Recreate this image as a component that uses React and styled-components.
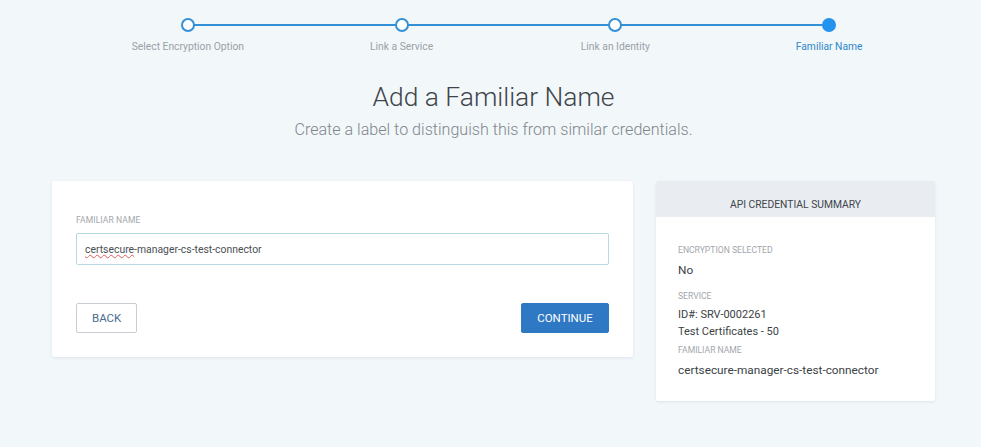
import React from 'react';
import styled, { createGlobalStyle } from 'styled-components';

const steps = [
  'Select Encryption Option',
  'Link a Service',
  'Link an Identity',
  'Familiar Name',
];

const summary = [
  { label: 'ENCRYPTION SELECTED', values: ['No'], big: true },
  { label: 'SERVICE', values: ['ID#: SRV-0002261', 'Test Certificates - 50'] },
  { label: 'FAMILIAR NAME', values: ['certsecure-manager-cs-test-connector'], big: true },
];

const App = () => {
  const active = steps.length - 1;
  return (
    <Page>
      <GlobalStyle />
      <Stepper>
        <Track />
        {steps.map((s, i) => (
          <Step key={s}>
            <Dot done={i === active} />
            <StepLabel active={i === active}>{s}</StepLabel>
          </Step>
        ))}
      </Stepper>

      <Heading>
        <h1>Add a Familiar Name</h1>
        <p>Create a label to distinguish this from similar credentials.</p>
      </Heading>

      <Content>
        <FormCard>
          <FieldLabel>FAMILIAR NAME</FieldLabel>
          <InputWrap>
            <Input defaultValue="certsecure-manager-cs-test-connector" spellCheck={false} />
            <Misspelt aria-hidden>certsecure</Misspelt>
          </InputWrap>
          <Actions>
            <Button>BACK</Button>
            <Button primary>CONTINUE</Button>
          </Actions>
        </FormCard>

        <SummaryCard>
          <SummaryHead>API CREDENTIAL SUMMARY</SummaryHead>
          <SummaryBody>
            {summary.map(item => (
              <SummaryItem key={item.label}>
                <SmallLabel>{item.label}</SmallLabel>
                {item.values.map(v => (
                  <Value key={v} big={item.big}>{v}</Value>
                ))}
              </SummaryItem>
            ))}
          </SummaryBody>
        </SummaryCard>
      </Content>
    </Page>
  );
};

const GlobalStyle = createGlobalStyle`
  html, body {
    margin: 0;
    background: #f2f7fa;
  }
  * { box-sizing: border-box; }
  body {
    font-family: Roboto, "Liberation Sans", Arial, sans-serif;
    color: #3a3f45;
  }
`;

const Page = styled.div`
  width: 981px;
  height: 447px;
  padding-top: 18px;
`;

const Stepper = styled.div`
  position: relative;
  display: grid;
  grid-template-columns: repeat(4, 1fr);
  width: 855px;
  margin-left: 81px;
`;

const Track = styled.div`
  position: absolute;
  top: 6px;
  left: 107px;
  right: 107px;
  height: 2px;
  background: #3490d6;
`;

const Step = styled.div`
  display: flex;
  flex-direction: column;
  align-items: center;
  position: relative;
`;

const Dot = styled.span`
  width: 14px;
  height: 14px;
  border-radius: 50%;
  border: 2px solid ${p => (p.done ? '#2393ee' : '#3490d6')};
  background: ${p => (p.done ? '#2393ee' : '#ffffff')};
`;

const StepLabel = styled.span`
  margin-top: 8px;
  font-size: 10.3px;
  color: ${p => (p.active ? '#2e88cb' : '#9ba1a7')};
`;

const Heading = styled.div`
  text-align: center;
  margin-top: 28px;
  padding-left: 6px;

  h1 {
    margin: 0;
    font-size: 26.4px;
    font-weight: 300;
    color: #40454b;
    line-height: 32px;
  }
  p {
    margin: 7px 0 0;
    font-size: 16.1px;
    font-weight: 300;
    color: #80868c;
    line-height: 20px;
  }
`;

const Content = styled.div`
  display: flex;
  align-items: flex-start;
  gap: 23px;
  margin: 41px 0 0 52px;
`;

const Card = styled.div`
  background: #ffffff;
  border-radius: 2px;
  box-shadow: 0 1px 3px rgba(40, 70, 100, 0.1);
`;

const FormCard = styled(Card)`
  width: 581px;
  height: 176px;
  padding: 34px 24px 0;
`;

const FieldLabel = styled.div`
  font-size: 8.5px;
  color: #a2a7ac;
  letter-spacing: 0.1px;
  margin-bottom: 8px;
`;

const InputWrap = styled.div`
  position: relative;
  width: 533px;
`;

const Input = styled.input`
  display: block;
  width: 100%;
  height: 32px;
  border: 1px solid #b7d9e3;
  border-radius: 2px;
  padding: 0 8px;
  font-family: inherit;
  font-size: 10.4px;
  color: #4a4f55;
  outline: none;
`;

const Misspelt = styled.span`
  position: absolute;
  left: 9px;
  top: 0;
  line-height: 32px;
  font-size: 10.4px;
  color: transparent;
  text-decoration: underline wavy #e05a5a;
  text-decoration-thickness: 1px;
  text-underline-offset: 2px;
  pointer-events: none;
`;

const Actions = styled.div`
  display: flex;
  justify-content: space-between;
  width: 533px;
  margin-top: 38px;
`;

const Button = styled.button`
  height: 30px;
  padding: 0 15px;
  font-family: inherit;
  font-size: 11.5px;
  border-radius: 2px;
  cursor: pointer;
  border: 1px solid ${p => (p.primary ? '#2f78c4' : '#c7cdd3')};
  background: ${p => (p.primary ? '#2f78c4' : '#ffffff')};
  color: ${p => (p.primary ? '#ffffff' : '#4a6d90')};
  min-width: ${p => (p.primary ? '88px' : '60px')};
`;

const SummaryCard = styled(Card)`
  width: 279px;
  height: 220px;
  overflow: hidden;
`;

const SummaryHead = styled.div`
  height: 36px;
  background: #e9edf2;
  display: flex;
  align-items: center;
  justify-content: center;
  padding-top: 10px;
  font-size: 10.3px;
  color: #40454b;
`;

const SummaryBody = styled.div`
  padding: 27px 22px 0;
  display: flex;
  flex-direction: column;
  gap: 4px;
`;

const SummaryItem = styled.div`
  display: flex;
  flex-direction: column;
`;

const SmallLabel = styled.div`
  font-size: 8.6px;
  color: #a2a7ac;
  line-height: 12px;
  margin-bottom: 4px;
`;

const Value = styled.div`
  font-size: ${p => (p.big ? '11.8px' : '11px')};
  line-height: ${p => (p.big ? '20px' : '17px')};
  margin-bottom: ${p => (p.big ? '6px' : '0')};
  color: #3a3f45;
`;

export default App;
